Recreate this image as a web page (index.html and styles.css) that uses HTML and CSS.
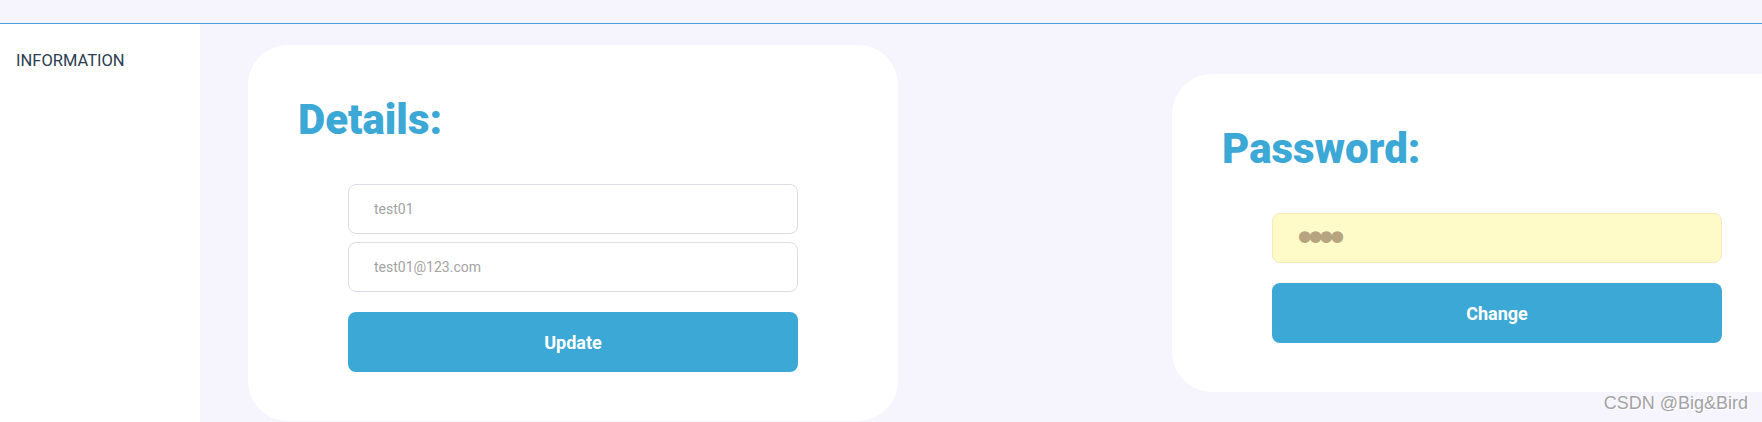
FILE: index.html
```html
<!DOCTYPE html>
<HTML>
  <HEAD>
    <META charset="UTF-8"/>
    <META name="viewport" content="width=device-width, initial-scale=1.0"/>
    <link rel="stylesheet" href="styles.css">
    <TITLE>Information</TITLE>
  </HEAD>
  <BODY>
    <DIV class="header"></DIV>

    <DIV class="main">
      <DIV class="sidebar">
        <P>INFORMATION</P>
      </DIV>

      <DIV class="content">
        <DIV class="card">
          <H1>Details:</H1>
          <FORM class="form" onsubmit="return false">
            <INPUT type="text" name="username" value="test01"/>
            <INPUT type="text" name="email" value="test01@123.com"/>
            <BUTTON type="submit">Update</BUTTON>
          </FORM>
        </DIV>

        <DIV class="card">
          <H1>Password:</H1>
          <FORM class="form" onsubmit="return false">
            <INPUT class="secret" type="password" name="password" value="test"/>
            <BUTTON type="submit">Change</BUTTON>
          </FORM>
        </DIV>
      </DIV>
    </DIV>

    <DIV class="mark">CSDN @Big&amp;Bird</DIV>
  </BODY>
</HTML>
```

FILE: styles.css
```css
*{
  font-family: Roboto, sans-serif;
  margin: 0px;
  box-sizing: border-box;
}

body{
  background-color: #f6f5fe;
  height: 100vh;
  overflow: hidden;
}

.header{
  height: 24px;
  border-bottom: 1px solid #4a9fd6;
}

.main{
  display: flex;
  height: calc(100vh - 24px);
}

.sidebar{
  width: 200px;
  flex-shrink: 0;
  background-color: #FFF;
  padding: 27px 16px;
  color: #2c3e50;
  font-size: 16.5px;
}

.content{
  display: flex;
  align-items: center;
  align-self: flex-start;
  flex-shrink: 0;
  gap: 274px;
  padding: 21px 0px 0px 48px;
}

.card{
  width: 650px;
  flex-shrink: 0;
  background-color: #FFF;
  border-radius: 40px;
  padding: 50px 0px 49px;
}

.card h1{
  font-size: 42px;
  font-weight: 900;
  color: #3ca8d6;
  padding-left: 50px;
}

.form{
  display: flex;
  flex-direction: column;
  gap: 8px;
  margin: 40px 100px 0px;
}

.form input{
  height: 50px;
  border: 1px solid #dcdbe6;
  border-radius: 8px;
  padding: 0px 25px;
  font-size: 14px;
  color: #a3a3a3;
  background-color: #FFF;
  outline: none;
}

/* autofilled password field, big packed dots */
.form input.secret{
  background-color: #fffbc8;
  border-color: #f8e8b8;
  color: #b6a37f;
  font-family: "DejaVu Sans", sans-serif;
  font-size: 40px;
  letter-spacing: -12.8px;
  padding-left: 20px;
}

.form button{
  height: 60px;
  margin-top: 12px;
  border: 0px;
  border-radius: 8px;
  background-color: #3ca8d6;
  color: #FFF;
  font-size: 18px;
  font-weight: 700;
}

.mark{
  position: absolute;
  right: 14px;
  bottom: 8px;
  font-family: "Liberation Sans", sans-serif;
  font-size: 18px;
  color: #a3a3a3;
  text-shadow: 1px 1px 0px #FFF;
}
```
